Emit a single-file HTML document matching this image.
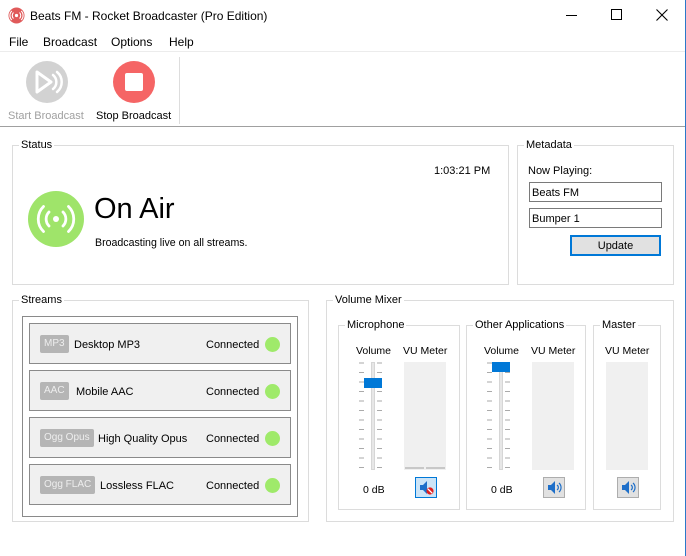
<!DOCTYPE html>
<html><head><style>
*{box-sizing:border-box;margin:0;padding:0}
body{width:686px;height:556px;background:#fff;font-family:"Liberation Sans",sans-serif;font-size:11px;color:#000;position:relative;overflow:hidden}
.a{position:absolute;white-space:nowrap}
.g{position:absolute;border:1px solid #dcdcdc}
.gt{position:absolute;background:#fff;padding:0 2px;top:-7px;left:6px;font-size:11px}
.row{position:absolute;left:29px;width:262px;height:41px;border:1px solid #8a8a8a;background:#f0f0f0}
.tag{position:absolute;left:10px;top:11px;height:18px;background:#b5b5b5;color:#eee;font-size:10px;line-height:18px;padding:0 4px;border-radius:2px}
.nm{position:absolute;top:15px;font-size:11px}
.cn{position:absolute;left:176px;top:15px;font-size:11px}
.dot{position:absolute;left:235px;top:13px;width:15px;height:15px;border-radius:50%;background:#9fea6a}
.vu{position:absolute;background:#f0f0f0}
.btn{position:absolute;width:22px;height:21px;background:#e1e1e1;border:1px solid #adadad}
</style></head><body>
<div class="a" style="right:0;top:0;width:1px;height:556px;background:#2b79c9"></div>
<svg class="a" style="left:8px;top:7px" width="17" height="17" viewBox="0 0 17 17"><circle cx="8.5" cy="8.5" r="8" fill="#e05a5a"/><circle cx="8.5" cy="8.5" r="1.6" fill="#fff"/><path d="M5.5 5.5a4.2 4.2 0 0 0 0 6M11.5 5.5a4.2 4.2 0 0 1 0 6M3.8 4a6.3 6.3 0 0 0 0 9M13.2 4a6.3 6.3 0 0 1 0 9" stroke="#fff" stroke-width="1.1" fill="none"/></svg>
<div class="a" style="left:30px;top:9px;font-size:12px">Beats FM - Rocket Broadcaster (Pro Edition)</div>
<div class="a" style="left:566px;top:15px;width:11px;height:1px;background:#000"></div>
<div class="a" style="left:611px;top:9px;width:11px;height:11px;border:1px solid #000"></div>
<svg class="a" style="left:656px;top:9px" width="12" height="12"><path d="M0.5 0.5L11.5 11.5M11.5 0.5L0.5 11.5" stroke="#000" stroke-width="1.1"/></svg>
<div class="a" style="left:9px;top:35px;font-size:12px">File</div>
<div class="a" style="left:43px;top:35px;font-size:12px">Broadcast</div>
<div class="a" style="left:111px;top:35px;font-size:12px">Options</div>
<div class="a" style="left:169px;top:35px;font-size:12px">Help</div>
<div class="a" style="left:0;top:51px;width:685px;height:1px;background:#ececec"></div>
<svg class="a" style="left:26px;top:61px" width="42" height="42"><circle cx="21" cy="21" r="21" fill="#d2d2d2"/><path d="M11 11L25 21L11 31Z" fill="none" stroke="#fff" stroke-width="3" stroke-linejoin="round"/><path d="M27 14a9 9 0 0 1 0 14M31 11a13 13 0 0 1 0 20" stroke="#fff" stroke-width="2.5" fill="none" stroke-linecap="round"/></svg>
<div class="a" style="left:8px;top:110px;color:#a0a0a0;font-size:11px">Start Broadcast</div>
<svg class="a" style="left:113px;top:61px" width="42" height="42"><circle cx="21" cy="21" r="21" fill="#f56565"/><rect x="12" y="12" width="18" height="18" rx="2" fill="#fff"/></svg>
<div class="a" style="left:96px;top:110px;font-size:11px">Stop Broadcast</div>
<div class="a" style="left:179px;top:57px;width:1px;height:67px;background:#ddd"></div>
<div class="a" style="left:0;top:126px;width:685px;height:1px;background:#a0a0a0"></div>
<div class="g" style="left:12px;top:145px;width:497px;height:140px"><span class="gt">Status</span></div>
<div class="a" style="left:434px;top:165px;font-size:11px">1:03:21 PM</div>
<svg class="a" style="left:28px;top:191px" width="56" height="56"><circle cx="28" cy="28" r="28" fill="#9fe46a"/><circle cx="28" cy="28" r="3" fill="#fff"/><path d="M21 21a10 10 0 0 0 0 14M35 21a10 10 0 0 1 0 14M15.5 15.5a17.5 17.5 0 0 0 0 25M40.5 15.5a17.5 17.5 0 0 1 0 25" stroke="#fff" stroke-width="2.8" fill="none" stroke-linecap="round"/></svg>
<div class="a" style="left:94px;top:193px;font-size:29px">On Air</div>
<div class="a" style="left:95px;top:237px;font-size:10.6px">Broadcasting live on all streams.</div>
<div class="g" style="left:517px;top:145px;width:157px;height:140px"><span class="gt">Metadata</span></div>
<div class="a" style="left:528px;top:165px;font-size:11px">Now Playing:</div>
<div class="a" style="left:529px;top:182px;width:133px;height:20px;border:1px solid #7a7a7a;padding:4px 2px;font-size:11px">Beats FM</div>
<div class="a" style="left:529px;top:208px;width:133px;height:20px;border:1px solid #7a7a7a;padding:4px 2px;font-size:11px">Bumper 1</div>
<div class="a" style="left:570px;top:235px;width:91px;height:21px;border:2px solid #0078d7;background:#e1e1e1;text-align:center;line-height:19px;font-size:11px">Update</div>
<div class="g" style="left:12px;top:300px;width:297px;height:222px"><span class="gt">Streams</span></div>
<div class="a" style="left:22px;top:316px;width:276px;height:201px;border:1px solid #8a8a8a"></div>
<div class="row" style="top:323px"><span class="tag">MP3</span><span class="nm" style="left:44px">Desktop MP3</span><span class="cn">Connected</span><span class="dot"></span></div>
<div class="row" style="top:370px"><span class="tag">AAC</span><span class="nm" style="left:46px">Mobile AAC</span><span class="cn">Connected</span><span class="dot"></span></div>
<div class="row" style="top:417px"><span class="tag">Ogg Opus</span><span class="nm" style="left:68px">High Quality Opus</span><span class="cn">Connected</span><span class="dot"></span></div>
<div class="row" style="top:464px"><span class="tag">Ogg FLAC</span><span class="nm" style="left:70px">Lossless FLAC</span><span class="cn">Connected</span><span class="dot"></span></div>
<div class="g" style="left:326px;top:300px;width:348px;height:222px"><span class="gt">Volume Mixer</span></div>
<div class="g" style="left:338px;top:325px;width:122px;height:185px"><span class="gt">Microphone</span></div>
<div class="g" style="left:466px;top:325px;width:120px;height:185px"><span class="gt">Other Applications</span></div>
<div class="g" style="left:593px;top:325px;width:68px;height:185px"><span class="gt">Master</span></div>
<div class="a" style="left:356px;top:345px;font-size:10.5px">Volume</div>
<div class="a" style="left:403px;top:345px;font-size:10.5px">VU Meter</div>
<div class="a" style="left:484px;top:345px;font-size:10.5px">Volume</div>
<div class="a" style="left:531px;top:345px;font-size:10.5px">VU Meter</div>
<div class="a" style="left:605px;top:345px;font-size:10.5px">VU Meter</div>
<div class="a" style="left:371px;top:362px;width:4px;height:108px;background:#e7e7e7;border:1px solid #d6d6d6"></div>
<div class="a" style="left:499px;top:362px;width:4px;height:108px;background:#e7e7e7;border:1px solid #d6d6d6"></div>
<svg class="a" style="left:357px;top:361px" width="170" height="110">
<g stroke="#aaa" stroke-width="1">
<path d="M2 2h5M20 2h5M2 11.5h5M20 11.5h5M2 21h5M20 21h5M2 30.5h5M20 30.5h5M2 40h5M20 40h5M2 49.5h5M20 49.5h5M2 59h5M20 59h5M2 68.5h5M20 68.5h5M2 78h5M20 78h5M2 87.5h5M20 87.5h5M2 97h5M20 97h5M2 106.5h5M20 106.5h5"/>
<path transform="translate(128 0)" d="M2 2h5M20 2h5M2 11.5h5M20 11.5h5M2 21h5M20 21h5M2 30.5h5M20 30.5h5M2 40h5M20 40h5M2 49.5h5M20 49.5h5M2 59h5M20 59h5M2 68.5h5M20 68.5h5M2 78h5M20 78h5M2 87.5h5M20 87.5h5M2 97h5M20 97h5M2 106.5h5M20 106.5h5"/>
</g></svg>
<div class="a" style="left:364px;top:378px;width:18px;height:10px;background:#0078d7"></div>
<div class="a" style="left:492px;top:362px;width:18px;height:10px;background:#0078d7"></div>
<div class="vu" style="left:404px;top:362px;width:42px;height:108px"></div>
<div class="a" style="left:405px;top:467px;width:19px;height:2px;background:#c8c8c8"></div>
<div class="a" style="left:426px;top:467px;width:19px;height:2px;background:#c8c8c8"></div>
<div class="vu" style="left:532px;top:362px;width:42px;height:108px"></div>
<div class="vu" style="left:606px;top:362px;width:42px;height:108px"></div>
<div class="a" style="left:363px;top:484px;font-size:10.5px">0 dB</div>
<div class="a" style="left:491px;top:484px;font-size:10.5px">0 dB</div>
<div class="btn" style="left:415px;top:477px;border-color:#0078d7;background:#cce4f7"><svg width="20" height="19" viewBox="0 0 20 19"><path d="M4 7h3l4-4v13l-4-4H4z" fill="#1e6fc9"/><circle cx="14" cy="13" r="3.6" fill="#e02020"/><path d="M11.8 10.8l4.4 4.4" stroke="#fff" stroke-width="1.3"/></svg></div>
<div class="btn" style="left:543px;top:477px"><svg width="20" height="19" viewBox="0 0 20 19"><path d="M4 7h3l4-4v13l-4-4H4z" fill="#1e6fc9"/><path d="M13 7a3 3 0 0 1 0 5M15 5a6 6 0 0 1 0 9" stroke="#1e6fc9" stroke-width="1.2" fill="none"/></svg></div>
<div class="btn" style="left:617px;top:477px"><svg width="20" height="19" viewBox="0 0 20 19"><path d="M4 7h3l4-4v13l-4-4H4z" fill="#1e6fc9"/><path d="M13 7a3 3 0 0 1 0 5M15 5a6 6 0 0 1 0 9" stroke="#1e6fc9" stroke-width="1.2" fill="none"/></svg></div>
</body></html>
